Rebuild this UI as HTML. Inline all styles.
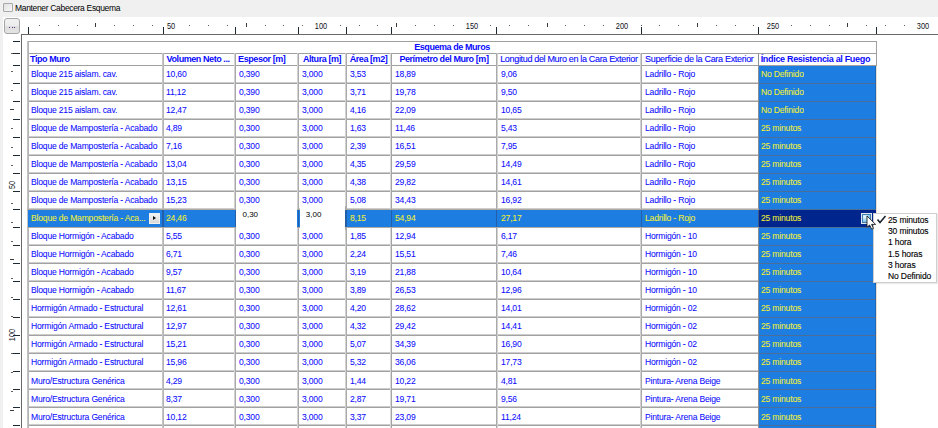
<!DOCTYPE html><html><head><meta charset="utf-8"><style>
*{margin:0;padding:0;box-sizing:border-box}
html,body{width:938px;height:428px;overflow:hidden;background:#f0f0f0;font-family:"Liberation Sans",sans-serif}
.a{position:absolute}
.t{position:absolute;white-space:nowrap;font-size:9.6px;letter-spacing:-0.2px;line-height:12px;color:#0a0aff;-webkit-text-stroke:0.06px currentColor;transform:scaleX(0.892);transform-origin:0 0}
.hb{font-weight:bold;font-size:9px;letter-spacing:-0.43px;-webkit-text-stroke:0;transform:none}
.y{color:#f0f030}
.dot{position:absolute;background:#3a3a3a}
</style></head><body>
<div class="a" style="left:3px;top:3px;width:10px;height:9px;border:1px solid #a8a8a8;background:linear-gradient(135deg,#e0e0e0,#f8f8f8);border-radius:1px"></div>
<div class="a" style="left:15px;top:2px;font-size:8.5px;letter-spacing:-0.33px;line-height:12px;color:#000;white-space:nowrap">Mantener Cabecera Esquema</div>
<div class="a" style="left:3px;top:17px;width:935px;height:411px;background:#fff"></div>
<div class="a" style="left:4px;top:18px;width:16px;height:16px;border:1px solid #a6a6a6;border-radius:3px;background:linear-gradient(#f2f2f2 0,#ececec 50%,#dedede 51%,#e4e4e4 100%)"></div>
<div class="a" style="left:9px;top:27px;width:1.2px;height:1.2px;background:#5a3a7a"></div>
<div class="a" style="left:11.5px;top:27px;width:1.2px;height:1.2px;background:#5a3a7a"></div>
<div class="a" style="left:14px;top:27px;width:1.2px;height:1.2px;background:#5a3a7a"></div>
<div class="dot" style="left:38.9px;top:25px;width:1px;height:1px;background:#606060"></div>
<div class="dot" style="left:57.7px;top:25px;width:1px;height:1px;background:#606060"></div>
<div class="dot" style="left:76.5px;top:25px;width:1px;height:1px;background:#606060"></div>
<div class="dot" style="left:95.3px;top:23px;width:1px;height:4px"></div>
<div class="dot" style="left:114.1px;top:25px;width:1px;height:1px;background:#606060"></div>
<div class="dot" style="left:132.9px;top:25px;width:1px;height:1px;background:#606060"></div>
<div class="dot" style="left:151.7px;top:25px;width:1px;height:1px;background:#606060"></div>
<div class="a" style="left:156.0px;top:20.5px;width:30px;text-align:center;font-size:8.5px;line-height:10px;color:#101020;transform:scaleX(0.87)">50</div>
<div class="dot" style="left:189.3px;top:25px;width:1px;height:1px;background:#606060"></div>
<div class="dot" style="left:208.1px;top:25px;width:1px;height:1px;background:#606060"></div>
<div class="dot" style="left:226.9px;top:25px;width:1px;height:1px;background:#606060"></div>
<div class="dot" style="left:245.7px;top:23px;width:1px;height:4px"></div>
<div class="dot" style="left:264.5px;top:25px;width:1px;height:1px;background:#606060"></div>
<div class="dot" style="left:283.3px;top:25px;width:1px;height:1px;background:#606060"></div>
<div class="dot" style="left:302.1px;top:25px;width:1px;height:1px;background:#606060"></div>
<div class="a" style="left:306.4px;top:20.5px;width:30px;text-align:center;font-size:8.5px;line-height:10px;color:#101020;transform:scaleX(0.87)">100</div>
<div class="dot" style="left:339.7px;top:25px;width:1px;height:1px;background:#606060"></div>
<div class="dot" style="left:358.5px;top:25px;width:1px;height:1px;background:#606060"></div>
<div class="dot" style="left:377.3px;top:25px;width:1px;height:1px;background:#606060"></div>
<div class="dot" style="left:396.1px;top:23px;width:1px;height:4px"></div>
<div class="dot" style="left:414.9px;top:25px;width:1px;height:1px;background:#606060"></div>
<div class="dot" style="left:433.7px;top:25px;width:1px;height:1px;background:#606060"></div>
<div class="dot" style="left:452.5px;top:25px;width:1px;height:1px;background:#606060"></div>
<div class="a" style="left:456.8px;top:20.5px;width:30px;text-align:center;font-size:8.5px;line-height:10px;color:#101020;transform:scaleX(0.87)">150</div>
<div class="dot" style="left:490.1px;top:25px;width:1px;height:1px;background:#606060"></div>
<div class="dot" style="left:508.9px;top:25px;width:1px;height:1px;background:#606060"></div>
<div class="dot" style="left:527.7px;top:25px;width:1px;height:1px;background:#606060"></div>
<div class="dot" style="left:546.5px;top:23px;width:1px;height:4px"></div>
<div class="dot" style="left:565.3px;top:25px;width:1px;height:1px;background:#606060"></div>
<div class="dot" style="left:584.1px;top:25px;width:1px;height:1px;background:#606060"></div>
<div class="dot" style="left:602.9px;top:25px;width:1px;height:1px;background:#606060"></div>
<div class="a" style="left:607.2px;top:20.5px;width:30px;text-align:center;font-size:8.5px;line-height:10px;color:#101020;transform:scaleX(0.87)">200</div>
<div class="dot" style="left:640.5px;top:25px;width:1px;height:1px;background:#606060"></div>
<div class="dot" style="left:659.3px;top:25px;width:1px;height:1px;background:#606060"></div>
<div class="dot" style="left:678.1px;top:25px;width:1px;height:1px;background:#606060"></div>
<div class="dot" style="left:696.9px;top:23px;width:1px;height:4px"></div>
<div class="dot" style="left:715.7px;top:25px;width:1px;height:1px;background:#606060"></div>
<div class="dot" style="left:734.5px;top:25px;width:1px;height:1px;background:#606060"></div>
<div class="dot" style="left:753.3px;top:25px;width:1px;height:1px;background:#606060"></div>
<div class="a" style="left:757.6px;top:20.5px;width:30px;text-align:center;font-size:8.5px;line-height:10px;color:#101020;transform:scaleX(0.87)">250</div>
<div class="dot" style="left:790.9px;top:25px;width:1px;height:1px;background:#606060"></div>
<div class="dot" style="left:809.7px;top:25px;width:1px;height:1px;background:#606060"></div>
<div class="dot" style="left:828.5px;top:25px;width:1px;height:1px;background:#606060"></div>
<div class="dot" style="left:847.3px;top:23px;width:1px;height:4px"></div>
<div class="dot" style="left:866.1px;top:25px;width:1px;height:1px;background:#606060"></div>
<div class="dot" style="left:884.9px;top:25px;width:1px;height:1px;background:#606060"></div>
<div class="dot" style="left:903.7px;top:25px;width:1px;height:1px;background:#606060"></div>
<div class="a" style="left:908.0px;top:20.5px;width:30px;text-align:center;font-size:8.5px;line-height:10px;color:#101020;transform:scaleX(0.87)">300</div>
<div class="dot" style="left:28px;top:27px;width:1px;height:7px;background:#1e2830"></div>
<div class="dot" style="left:163px;top:27px;width:1px;height:7px;background:#1e2830"></div>
<div class="dot" style="left:235px;top:27px;width:1px;height:7px;background:#1e2830"></div>
<div class="dot" style="left:298px;top:27px;width:1px;height:7px;background:#1e2830"></div>
<div class="dot" style="left:346px;top:27px;width:1px;height:7px;background:#1e2830"></div>
<div class="dot" style="left:391px;top:27px;width:1px;height:7px;background:#1e2830"></div>
<div class="dot" style="left:496px;top:27px;width:1px;height:7px;background:#1e2830"></div>
<div class="dot" style="left:641px;top:27px;width:1px;height:7px;background:#1e2830"></div>
<div class="dot" style="left:758px;top:27px;width:1px;height:7px;background:#1e2830"></div>
<div class="dot" style="left:876px;top:27px;width:1px;height:7px;background:#1e2830"></div>
<div class="a" style="left:21px;top:34px;width:917px;height:1px;background:#686868"></div>
<div class="a" style="left:21px;top:34px;width:1px;height:394px;background:#686868"></div>
<div class="dot" style="left:11px;top:52.6px;width:2px;height:1px;background:#606060"></div>
<div class="dot" style="left:11px;top:71.4px;width:2px;height:1px;background:#606060"></div>
<div class="dot" style="left:11px;top:90.2px;width:2px;height:1px;background:#606060"></div>
<div class="dot" style="left:10px;top:109.0px;width:4px;height:1px"></div>
<div class="dot" style="left:11px;top:127.8px;width:2px;height:1px;background:#606060"></div>
<div class="dot" style="left:11px;top:146.6px;width:2px;height:1px;background:#606060"></div>
<div class="dot" style="left:11px;top:165.4px;width:2px;height:1px;background:#606060"></div>
<svg class="a" style="left:4px;top:169.7px" width="16" height="30" viewBox="0 0 16 30"><text x="0" y="0" transform="translate(11.3 15) rotate(-90) scale(0.87 1)" text-anchor="middle" font-family="Liberation Sans" font-size="8.5" fill="#101020">50</text></svg>
<div class="dot" style="left:11px;top:203.0px;width:2px;height:1px;background:#606060"></div>
<div class="dot" style="left:11px;top:221.8px;width:2px;height:1px;background:#606060"></div>
<div class="dot" style="left:11px;top:240.6px;width:2px;height:1px;background:#606060"></div>
<div class="dot" style="left:10px;top:259.4px;width:4px;height:1px"></div>
<div class="dot" style="left:11px;top:278.2px;width:2px;height:1px;background:#606060"></div>
<div class="dot" style="left:11px;top:297.0px;width:2px;height:1px;background:#606060"></div>
<div class="dot" style="left:11px;top:315.8px;width:2px;height:1px;background:#606060"></div>
<svg class="a" style="left:4px;top:320.1px" width="16" height="30" viewBox="0 0 16 30"><text x="0" y="0" transform="translate(11.3 15) rotate(-90) scale(0.87 1)" text-anchor="middle" font-family="Liberation Sans" font-size="8.5" fill="#101020">100</text></svg>
<div class="dot" style="left:11px;top:353.4px;width:2px;height:1px;background:#606060"></div>
<div class="dot" style="left:11px;top:372.2px;width:2px;height:1px;background:#606060"></div>
<div class="dot" style="left:11px;top:391.0px;width:2px;height:1px;background:#606060"></div>
<div class="dot" style="left:10px;top:409.8px;width:4px;height:1px"></div>
<div class="dot" style="left:13px;top:41px;width:7px;height:1px;background:#1e2830"></div>
<div class="dot" style="left:13px;top:53px;width:7px;height:1px;background:#1e2830"></div>
<div class="dot" style="left:13px;top:65px;width:7px;height:1px;background:#1e2830"></div>
<div class="dot" style="left:13px;top:83px;width:7px;height:1px;background:#1e2830"></div>
<div class="dot" style="left:13px;top:101px;width:7px;height:1px;background:#1e2830"></div>
<div class="dot" style="left:13px;top:119px;width:7px;height:1px;background:#1e2830"></div>
<div class="dot" style="left:13px;top:137px;width:7px;height:1px;background:#1e2830"></div>
<div class="dot" style="left:13px;top:155px;width:7px;height:1px;background:#1e2830"></div>
<div class="dot" style="left:13px;top:173px;width:7px;height:1px;background:#1e2830"></div>
<div class="dot" style="left:13px;top:191px;width:7px;height:1px;background:#1e2830"></div>
<div class="dot" style="left:13px;top:209px;width:7px;height:1px;background:#1e2830"></div>
<div class="dot" style="left:13px;top:227px;width:7px;height:1px;background:#1e2830"></div>
<div class="dot" style="left:13px;top:245px;width:7px;height:1px;background:#1e2830"></div>
<div class="dot" style="left:13px;top:263px;width:7px;height:1px;background:#1e2830"></div>
<div class="dot" style="left:13px;top:281px;width:7px;height:1px;background:#1e2830"></div>
<div class="dot" style="left:13px;top:299px;width:7px;height:1px;background:#1e2830"></div>
<div class="dot" style="left:13px;top:317px;width:7px;height:1px;background:#1e2830"></div>
<div class="dot" style="left:13px;top:335px;width:7px;height:1px;background:#1e2830"></div>
<div class="dot" style="left:13px;top:353px;width:7px;height:1px;background:#1e2830"></div>
<div class="dot" style="left:13px;top:371px;width:7px;height:1px;background:#1e2830"></div>
<div class="dot" style="left:13px;top:389px;width:7px;height:1px;background:#1e2830"></div>
<div class="dot" style="left:13px;top:407px;width:7px;height:1px;background:#1e2830"></div>
<div class="dot" style="left:13px;top:425px;width:7px;height:1px;background:#1e2830"></div>
<div class="a" style="left:27px;top:41px;width:850px;height:1px;background:#a0a0a0"></div>
<div class="a" style="left:27px;top:53px;width:850px;height:1px;background:#a0a0a0"></div>
<div class="a" style="left:27px;top:65px;width:850px;height:1px;background:#a0a0a0"></div>
<div class="a" style="left:27px;top:82px;width:732px;height:1px;background:#cdcdcd"></div>
<div class="a" style="left:27px;top:83px;width:732px;height:1px;background:#a2a2a2"></div>
<div class="a" style="left:27px;top:100px;width:732px;height:1px;background:#cdcdcd"></div>
<div class="a" style="left:27px;top:101px;width:732px;height:1px;background:#a2a2a2"></div>
<div class="a" style="left:27px;top:118px;width:732px;height:1px;background:#cdcdcd"></div>
<div class="a" style="left:27px;top:119px;width:732px;height:1px;background:#a2a2a2"></div>
<div class="a" style="left:27px;top:136px;width:732px;height:1px;background:#cdcdcd"></div>
<div class="a" style="left:27px;top:137px;width:732px;height:1px;background:#a2a2a2"></div>
<div class="a" style="left:27px;top:154px;width:732px;height:1px;background:#cdcdcd"></div>
<div class="a" style="left:27px;top:155px;width:732px;height:1px;background:#a2a2a2"></div>
<div class="a" style="left:27px;top:172px;width:732px;height:1px;background:#cdcdcd"></div>
<div class="a" style="left:27px;top:173px;width:732px;height:1px;background:#a2a2a2"></div>
<div class="a" style="left:27px;top:190px;width:732px;height:1px;background:#cdcdcd"></div>
<div class="a" style="left:27px;top:191px;width:732px;height:1px;background:#a2a2a2"></div>
<div class="a" style="left:27px;top:208px;width:732px;height:1px;background:#cdcdcd"></div>
<div class="a" style="left:27px;top:209px;width:732px;height:1px;background:#a2a2a2"></div>
<div class="a" style="left:27px;top:226px;width:732px;height:1px;background:#cdcdcd"></div>
<div class="a" style="left:27px;top:227px;width:732px;height:1px;background:#a2a2a2"></div>
<div class="a" style="left:27px;top:244px;width:732px;height:1px;background:#cdcdcd"></div>
<div class="a" style="left:27px;top:245px;width:732px;height:1px;background:#a2a2a2"></div>
<div class="a" style="left:27px;top:262px;width:732px;height:1px;background:#cdcdcd"></div>
<div class="a" style="left:27px;top:263px;width:732px;height:1px;background:#a2a2a2"></div>
<div class="a" style="left:27px;top:280px;width:732px;height:1px;background:#cdcdcd"></div>
<div class="a" style="left:27px;top:281px;width:732px;height:1px;background:#a2a2a2"></div>
<div class="a" style="left:27px;top:298px;width:732px;height:1px;background:#cdcdcd"></div>
<div class="a" style="left:27px;top:299px;width:732px;height:1px;background:#a2a2a2"></div>
<div class="a" style="left:27px;top:316px;width:732px;height:1px;background:#cdcdcd"></div>
<div class="a" style="left:27px;top:317px;width:732px;height:1px;background:#a2a2a2"></div>
<div class="a" style="left:27px;top:334px;width:732px;height:1px;background:#cdcdcd"></div>
<div class="a" style="left:27px;top:335px;width:732px;height:1px;background:#a2a2a2"></div>
<div class="a" style="left:27px;top:352px;width:732px;height:1px;background:#cdcdcd"></div>
<div class="a" style="left:27px;top:353px;width:732px;height:1px;background:#a2a2a2"></div>
<div class="a" style="left:27px;top:370px;width:732px;height:1px;background:#cdcdcd"></div>
<div class="a" style="left:27px;top:371px;width:732px;height:1px;background:#a2a2a2"></div>
<div class="a" style="left:27px;top:388px;width:732px;height:1px;background:#cdcdcd"></div>
<div class="a" style="left:27px;top:389px;width:732px;height:1px;background:#a2a2a2"></div>
<div class="a" style="left:27px;top:406px;width:732px;height:1px;background:#cdcdcd"></div>
<div class="a" style="left:27px;top:407px;width:732px;height:1px;background:#a2a2a2"></div>
<div class="a" style="left:27px;top:424px;width:732px;height:1px;background:#cdcdcd"></div>
<div class="a" style="left:27px;top:425px;width:732px;height:1px;background:#a2a2a2"></div>
<div class="a" style="left:27px;top:41px;width:1px;height:387px;background:#c2c2c2"></div>
<div class="a" style="left:28px;top:41px;width:1px;height:387px;background:#b4b4b4"></div>
<div class="a" style="left:162px;top:53px;width:1px;height:375px;background:#c4c4c4"></div>
<div class="a" style="left:163px;top:53px;width:1px;height:375px;background:#b4b4b4"></div>
<div class="a" style="left:234px;top:53px;width:1px;height:375px;background:#d2d2d2"></div>
<div class="a" style="left:235px;top:53px;width:1px;height:375px;background:#aaaaaa"></div>
<div class="a" style="left:297px;top:53px;width:1px;height:375px;background:#d2d2d2"></div>
<div class="a" style="left:298px;top:53px;width:1px;height:375px;background:#aaaaaa"></div>
<div class="a" style="left:345px;top:53px;width:1px;height:375px;background:#d2d2d2"></div>
<div class="a" style="left:346px;top:53px;width:1px;height:375px;background:#aaaaaa"></div>
<div class="a" style="left:390px;top:53px;width:1px;height:375px;background:#d8d8d8"></div>
<div class="a" style="left:391px;top:53px;width:1px;height:375px;background:#a4a4a4"></div>
<div class="a" style="left:496px;top:53px;width:1px;height:375px;background:#aaaaaa"></div>
<div class="a" style="left:497px;top:53px;width:1px;height:375px;background:#d2d2d2"></div>
<div class="a" style="left:640px;top:53px;width:1px;height:375px;background:#d2d2d2"></div>
<div class="a" style="left:641px;top:53px;width:1px;height:375px;background:#aaaaaa"></div>
<div class="a" style="left:758px;top:53px;width:1px;height:375px;background:#8c9096"></div>
<div class="a" style="left:876px;top:41px;width:1px;height:25px;background:#a0a0a0"></div>
<div class="a" style="left:759px;top:66px;width:117px;height:362px;background:#1e7de0"></div>
<div class="a" style="left:875px;top:66px;width:1px;height:362px;background:#1a68b8"></div>
<div class="a" style="left:876px;top:66px;width:1px;height:362px;background:#e8ded2"></div>
<div class="a" style="left:759px;top:83px;width:117px;height:1px;background:#4a6e98"></div>
<div class="a" style="left:759px;top:101px;width:117px;height:1px;background:#4a6e98"></div>
<div class="a" style="left:759px;top:119px;width:117px;height:1px;background:#4a6e98"></div>
<div class="a" style="left:759px;top:137px;width:117px;height:1px;background:#4a6e98"></div>
<div class="a" style="left:759px;top:155px;width:117px;height:1px;background:#4a6e98"></div>
<div class="a" style="left:759px;top:173px;width:117px;height:1px;background:#4a6e98"></div>
<div class="a" style="left:759px;top:191px;width:117px;height:1px;background:#4a6e98"></div>
<div class="a" style="left:759px;top:209px;width:117px;height:1px;background:#4a6e98"></div>
<div class="a" style="left:759px;top:227px;width:117px;height:1px;background:#4a6e98"></div>
<div class="a" style="left:759px;top:245px;width:117px;height:1px;background:#4a6e98"></div>
<div class="a" style="left:759px;top:263px;width:117px;height:1px;background:#4a6e98"></div>
<div class="a" style="left:759px;top:281px;width:117px;height:1px;background:#4a6e98"></div>
<div class="a" style="left:759px;top:299px;width:117px;height:1px;background:#4a6e98"></div>
<div class="a" style="left:759px;top:317px;width:117px;height:1px;background:#4a6e98"></div>
<div class="a" style="left:759px;top:335px;width:117px;height:1px;background:#4a6e98"></div>
<div class="a" style="left:759px;top:353px;width:117px;height:1px;background:#4a6e98"></div>
<div class="a" style="left:759px;top:371px;width:117px;height:1px;background:#4a6e98"></div>
<div class="a" style="left:759px;top:389px;width:117px;height:1px;background:#4a6e98"></div>
<div class="a" style="left:759px;top:407px;width:117px;height:1px;background:#4a6e98"></div>
<div class="a" style="left:759px;top:425px;width:117px;height:1px;background:#4a6e98"></div>
<div class="a" style="left:27px;top:209px;width:732px;height:1px;background:#b0aaa2"></div>
<div class="a" style="left:27px;top:227px;width:732px;height:1px;background:#b0aaa2"></div>
<div class="a" style="left:28px;top:210px;width:731px;height:17px;background:#1e7de0"></div>
<div class="a" style="left:759px;top:210px;width:117px;height:17px;background:#00258c"></div>
<div class="a" style="left:162px;top:210px;width:1px;height:17px;background:rgba(40,60,100,0.45)"></div>
<div class="a" style="left:163px;top:210px;width:1px;height:17px;background:rgba(40,60,100,0.45)"></div>
<div class="a" style="left:235px;top:210px;width:1px;height:17px;background:rgba(40,60,100,0.45)"></div>
<div class="a" style="left:298px;top:210px;width:1px;height:17px;background:rgba(40,60,100,0.45)"></div>
<div class="a" style="left:345px;top:210px;width:1px;height:17px;background:rgba(40,60,100,0.45)"></div>
<div class="a" style="left:346px;top:210px;width:1px;height:17px;background:rgba(40,60,100,0.45)"></div>
<div class="a" style="left:391px;top:210px;width:1px;height:17px;background:rgba(40,60,100,0.45)"></div>
<div class="a" style="left:496px;top:210px;width:1px;height:17px;background:rgba(40,60,100,0.45)"></div>
<div class="a" style="left:641px;top:210px;width:1px;height:17px;background:rgba(40,60,100,0.45)"></div>
<div class="a" style="left:758px;top:210px;width:1px;height:17px;background:#3a5a88"></div>
<div class="a" style="left:236px;top:206px;width:61px;height:24px;background:#fff"></div>
<div class="a" style="left:300px;top:206px;width:45px;height:24px;background:#fff"></div>
<div class="a" style="left:235px;top:206px;width:1px;height:3px;background:#aaaaaa"></div>
<div class="a" style="left:235px;top:227px;width:1px;height:3px;background:#aaaaaa"></div>
<div class="a" style="left:298px;top:206px;width:1px;height:3px;background:#aaaaaa"></div>
<div class="a" style="left:298px;top:227px;width:1px;height:3px;background:#aaaaaa"></div>
<div class="a" style="left:345px;top:206px;width:1px;height:3px;background:#aaaaaa"></div>
<div class="a" style="left:345px;top:227px;width:1px;height:3px;background:#aaaaaa"></div>
<div class="t hb" style="left:0;width:904px;text-align:center;top:41px">Esquema de Muros</div>
<div class="t hb" style="left:30.0px;top:53px">Tipo Muro</div>
<div class="t hb" style="left:166.6px;top:53px">Volumen Neto ...</div>
<div class="t hb" style="left:238.1px;top:53px">Espesor [m]</div>
<div class="t hb" style="left:302.9px;top:53px">Altura [m]</div>
<div class="t hb" style="left:349.7px;top:53px">Área [m2]</div>
<div class="t hb" style="left:399.4px;top:53px">Perímetro del Muro [m]</div>
<div class="t" style="left:500.2px;top:53px;letter-spacing:-0.33px;font-size:9px;transform:none;-webkit-text-stroke:0.12px currentColor">Longitud del Muro en la Cara Exterior</div>
<div class="t" style="left:645.0px;top:53px;letter-spacing:-0.3px;font-size:9px;transform:none;-webkit-text-stroke:0.12px currentColor">Superficie de la Cara Exterior</div>
<div class="t hb" style="left:760.7px;top:53px;letter-spacing:-0.32px">Índice Resistencia al Fuego</div>
<div class="t" style="left:30.6px;top:67.5px">Bloque 215 aislam. cav.</div>
<div class="t" style="left:166.2px;top:67.5px">10,60</div>
<div class="t" style="left:238.6px;top:67.5px">0,390</div>
<div class="t" style="left:301.8px;top:67.5px">3,000</div>
<div class="t" style="left:349.8px;top:67.5px">3,53</div>
<div class="t" style="left:395.0px;top:67.5px">18,89</div>
<div class="t" style="left:500.5px;top:67.5px">9,06</div>
<div class="t" style="left:644.6px;top:67.5px">Ladrillo - Rojo</div>
<div class="t y" style="left:760.8px;top:67.5px">No Definido</div>
<div class="t" style="left:30.6px;top:85.5px">Bloque 215 aislam. cav.</div>
<div class="t" style="left:166.2px;top:85.5px">11,12</div>
<div class="t" style="left:238.6px;top:85.5px">0,390</div>
<div class="t" style="left:301.8px;top:85.5px">3,000</div>
<div class="t" style="left:349.8px;top:85.5px">3,71</div>
<div class="t" style="left:395.0px;top:85.5px">19,78</div>
<div class="t" style="left:500.5px;top:85.5px">9,50</div>
<div class="t" style="left:644.6px;top:85.5px">Ladrillo - Rojo</div>
<div class="t y" style="left:760.8px;top:85.5px">No Definido</div>
<div class="t" style="left:30.6px;top:103.5px">Bloque 215 aislam. cav.</div>
<div class="t" style="left:166.2px;top:103.5px">12,47</div>
<div class="t" style="left:238.6px;top:103.5px">0,390</div>
<div class="t" style="left:301.8px;top:103.5px">3,000</div>
<div class="t" style="left:349.8px;top:103.5px">4,16</div>
<div class="t" style="left:395.0px;top:103.5px">22,09</div>
<div class="t" style="left:500.5px;top:103.5px">10,65</div>
<div class="t" style="left:644.6px;top:103.5px">Ladrillo - Rojo</div>
<div class="t y" style="left:760.8px;top:103.5px">No Definido</div>
<div class="t" style="left:30.6px;top:121.5px">Bloque de Mampostería - Acabado</div>
<div class="t" style="left:166.2px;top:121.5px">4,89</div>
<div class="t" style="left:238.6px;top:121.5px">0,300</div>
<div class="t" style="left:301.8px;top:121.5px">3,000</div>
<div class="t" style="left:349.8px;top:121.5px">1,63</div>
<div class="t" style="left:395.0px;top:121.5px">11,46</div>
<div class="t" style="left:500.5px;top:121.5px">5,43</div>
<div class="t" style="left:644.6px;top:121.5px">Ladrillo - Rojo</div>
<div class="t y" style="left:760.8px;top:121.5px">25 minutos</div>
<div class="t" style="left:30.6px;top:139.5px">Bloque de Mampostería - Acabado</div>
<div class="t" style="left:166.2px;top:139.5px">7,16</div>
<div class="t" style="left:238.6px;top:139.5px">0,300</div>
<div class="t" style="left:301.8px;top:139.5px">3,000</div>
<div class="t" style="left:349.8px;top:139.5px">2,39</div>
<div class="t" style="left:395.0px;top:139.5px">16,51</div>
<div class="t" style="left:500.5px;top:139.5px">7,95</div>
<div class="t" style="left:644.6px;top:139.5px">Ladrillo - Rojo</div>
<div class="t y" style="left:760.8px;top:139.5px">25 minutos</div>
<div class="t" style="left:30.6px;top:157.5px">Bloque de Mampostería - Acabado</div>
<div class="t" style="left:166.2px;top:157.5px">13,04</div>
<div class="t" style="left:238.6px;top:157.5px">0,300</div>
<div class="t" style="left:301.8px;top:157.5px">3,000</div>
<div class="t" style="left:349.8px;top:157.5px">4,35</div>
<div class="t" style="left:395.0px;top:157.5px">29,59</div>
<div class="t" style="left:500.5px;top:157.5px">14,49</div>
<div class="t" style="left:644.6px;top:157.5px">Ladrillo - Rojo</div>
<div class="t y" style="left:760.8px;top:157.5px">25 minutos</div>
<div class="t" style="left:30.6px;top:175.5px">Bloque de Mampostería - Acabado</div>
<div class="t" style="left:166.2px;top:175.5px">13,15</div>
<div class="t" style="left:238.6px;top:175.5px">0,300</div>
<div class="t" style="left:301.8px;top:175.5px">3,000</div>
<div class="t" style="left:349.8px;top:175.5px">4,38</div>
<div class="t" style="left:395.0px;top:175.5px">29,82</div>
<div class="t" style="left:500.5px;top:175.5px">14,61</div>
<div class="t" style="left:644.6px;top:175.5px">Ladrillo - Rojo</div>
<div class="t y" style="left:760.8px;top:175.5px">25 minutos</div>
<div class="t" style="left:30.6px;top:193.5px">Bloque de Mampostería - Acabado</div>
<div class="t" style="left:166.2px;top:193.5px">15,23</div>
<div class="t" style="left:238.6px;top:193.5px">0,300</div>
<div class="t" style="left:301.8px;top:193.5px">3,000</div>
<div class="t" style="left:349.8px;top:193.5px">5,08</div>
<div class="t" style="left:395.0px;top:193.5px">34,43</div>
<div class="t" style="left:500.5px;top:193.5px">16,92</div>
<div class="t" style="left:644.6px;top:193.5px">Ladrillo - Rojo</div>
<div class="t y" style="left:760.8px;top:193.5px">25 minutos</div>
<div class="t y" style="left:30.6px;top:211.5px">Bloque de Mampostería - Aca...</div>
<div class="t y" style="left:166.2px;top:211.5px">24,46</div>
<div class="t y" style="left:349.8px;top:211.5px">8,15</div>
<div class="t y" style="left:395.0px;top:211.5px">54,94</div>
<div class="t y" style="left:500.5px;top:211.5px">27,17</div>
<div class="t y" style="left:644.6px;top:211.5px">Ladrillo - Rojo</div>
<div class="t y" style="left:760.8px;top:211.5px">25 minutos</div>
<div class="t" style="left:30.6px;top:229.5px">Bloque Hormigón - Acabado</div>
<div class="t" style="left:166.2px;top:229.5px">5,55</div>
<div class="t" style="left:238.6px;top:229.5px">0,300</div>
<div class="t" style="left:301.8px;top:229.5px">3,000</div>
<div class="t" style="left:349.8px;top:229.5px">1,85</div>
<div class="t" style="left:395.0px;top:229.5px">12,94</div>
<div class="t" style="left:500.5px;top:229.5px">6,17</div>
<div class="t" style="left:644.6px;top:229.5px">Hormigón - 10</div>
<div class="t y" style="left:760.8px;top:229.5px">25 minutos</div>
<div class="t" style="left:30.6px;top:247.5px">Bloque Hormigón - Acabado</div>
<div class="t" style="left:166.2px;top:247.5px">6,71</div>
<div class="t" style="left:238.6px;top:247.5px">0,300</div>
<div class="t" style="left:301.8px;top:247.5px">3,000</div>
<div class="t" style="left:349.8px;top:247.5px">2,24</div>
<div class="t" style="left:395.0px;top:247.5px">15,51</div>
<div class="t" style="left:500.5px;top:247.5px">7,46</div>
<div class="t" style="left:644.6px;top:247.5px">Hormigón - 10</div>
<div class="t y" style="left:760.8px;top:247.5px">25 minutos</div>
<div class="t" style="left:30.6px;top:265.5px">Bloque Hormigón - Acabado</div>
<div class="t" style="left:166.2px;top:265.5px">9,57</div>
<div class="t" style="left:238.6px;top:265.5px">0,300</div>
<div class="t" style="left:301.8px;top:265.5px">3,000</div>
<div class="t" style="left:349.8px;top:265.5px">3,19</div>
<div class="t" style="left:395.0px;top:265.5px">21,88</div>
<div class="t" style="left:500.5px;top:265.5px">10,64</div>
<div class="t" style="left:644.6px;top:265.5px">Hormigón - 10</div>
<div class="t y" style="left:760.8px;top:265.5px">25 minutos</div>
<div class="t" style="left:30.6px;top:283.5px">Bloque Hormigón - Acabado</div>
<div class="t" style="left:166.2px;top:283.5px">11,67</div>
<div class="t" style="left:238.6px;top:283.5px">0,300</div>
<div class="t" style="left:301.8px;top:283.5px">3,000</div>
<div class="t" style="left:349.8px;top:283.5px">3,89</div>
<div class="t" style="left:395.0px;top:283.5px">26,53</div>
<div class="t" style="left:500.5px;top:283.5px">12,96</div>
<div class="t" style="left:644.6px;top:283.5px">Hormigón - 10</div>
<div class="t y" style="left:760.8px;top:283.5px">25 minutos</div>
<div class="t" style="left:30.6px;top:301.5px">Hormigón Armado - Estructural</div>
<div class="t" style="left:166.2px;top:301.5px">12,61</div>
<div class="t" style="left:238.6px;top:301.5px">0,300</div>
<div class="t" style="left:301.8px;top:301.5px">3,000</div>
<div class="t" style="left:349.8px;top:301.5px">4,20</div>
<div class="t" style="left:395.0px;top:301.5px">28,62</div>
<div class="t" style="left:500.5px;top:301.5px">14,01</div>
<div class="t" style="left:644.6px;top:301.5px">Hormigón - 02</div>
<div class="t y" style="left:760.8px;top:301.5px">25 minutos</div>
<div class="t" style="left:30.6px;top:319.5px">Hormigón Armado - Estructural</div>
<div class="t" style="left:166.2px;top:319.5px">12,97</div>
<div class="t" style="left:238.6px;top:319.5px">0,300</div>
<div class="t" style="left:301.8px;top:319.5px">3,000</div>
<div class="t" style="left:349.8px;top:319.5px">4,32</div>
<div class="t" style="left:395.0px;top:319.5px">29,42</div>
<div class="t" style="left:500.5px;top:319.5px">14,41</div>
<div class="t" style="left:644.6px;top:319.5px">Hormigón - 02</div>
<div class="t y" style="left:760.8px;top:319.5px">25 minutos</div>
<div class="t" style="left:30.6px;top:337.5px">Hormigón Armado - Estructural</div>
<div class="t" style="left:166.2px;top:337.5px">15,21</div>
<div class="t" style="left:238.6px;top:337.5px">0,300</div>
<div class="t" style="left:301.8px;top:337.5px">3,000</div>
<div class="t" style="left:349.8px;top:337.5px">5,07</div>
<div class="t" style="left:395.0px;top:337.5px">34,39</div>
<div class="t" style="left:500.5px;top:337.5px">16,90</div>
<div class="t" style="left:644.6px;top:337.5px">Hormigón - 02</div>
<div class="t y" style="left:760.8px;top:337.5px">25 minutos</div>
<div class="t" style="left:30.6px;top:355.5px">Hormigón Armado - Estructural</div>
<div class="t" style="left:166.2px;top:355.5px">15,96</div>
<div class="t" style="left:238.6px;top:355.5px">0,300</div>
<div class="t" style="left:301.8px;top:355.5px">3,000</div>
<div class="t" style="left:349.8px;top:355.5px">5,32</div>
<div class="t" style="left:395.0px;top:355.5px">36,06</div>
<div class="t" style="left:500.5px;top:355.5px">17,73</div>
<div class="t" style="left:644.6px;top:355.5px">Hormigón - 02</div>
<div class="t y" style="left:760.8px;top:355.5px">25 minutos</div>
<div class="t" style="left:30.6px;top:374.5px">Muro/Estructura Genérica</div>
<div class="t" style="left:166.2px;top:374.5px">4,29</div>
<div class="t" style="left:238.6px;top:374.5px">0,300</div>
<div class="t" style="left:301.8px;top:374.5px">3,000</div>
<div class="t" style="left:349.8px;top:374.5px">1,44</div>
<div class="t" style="left:395.0px;top:374.5px">10,22</div>
<div class="t" style="left:500.5px;top:374.5px">4,81</div>
<div class="t" style="left:644.6px;top:374.5px">Pintura- Arena Beige</div>
<div class="t y" style="left:760.8px;top:374.5px">25 minutos</div>
<div class="t" style="left:30.6px;top:392.5px">Muro/Estructura Genérica</div>
<div class="t" style="left:166.2px;top:392.5px">8,37</div>
<div class="t" style="left:238.6px;top:392.5px">0,300</div>
<div class="t" style="left:301.8px;top:392.5px">3,000</div>
<div class="t" style="left:349.8px;top:392.5px">2,87</div>
<div class="t" style="left:395.0px;top:392.5px">19,71</div>
<div class="t" style="left:500.5px;top:392.5px">9,56</div>
<div class="t" style="left:644.6px;top:392.5px">Pintura- Arena Beige</div>
<div class="t y" style="left:760.8px;top:392.5px">25 minutos</div>
<div class="t" style="left:30.6px;top:410.5px">Muro/Estructura Genérica</div>
<div class="t" style="left:166.2px;top:410.5px">10,12</div>
<div class="t" style="left:238.6px;top:410.5px">0,300</div>
<div class="t" style="left:301.8px;top:410.5px">3,000</div>
<div class="t" style="left:349.8px;top:410.5px">3,37</div>
<div class="t" style="left:395.0px;top:410.5px">23,09</div>
<div class="t" style="left:500.5px;top:410.5px">11,24</div>
<div class="t" style="left:644.6px;top:410.5px">Pintura- Arena Beige</div>
<div class="t y" style="left:760.8px;top:410.5px">25 minutos</div>
<div class="a" style="left:242.5px;top:210px;font-size:8px;line-height:10px;color:#000;white-space:nowrap">0,30</div>
<div class="a" style="left:305.8px;top:210px;font-size:8px;line-height:10px;color:#000;white-space:nowrap">3,00</div>
<div class="a" style="left:149px;top:213px;width:11px;height:11px;border:1px solid #f0f0f0;background:linear-gradient(#f4f4f4,#d8d8d8)"></div>
<div class="a" style="left:153px;top:216px;width:0;height:0;border-top:2.5px solid transparent;border-bottom:2.5px solid transparent;border-left:3px solid #101010"></div>
<div class="a" style="left:861px;top:213px;width:11px;height:11px;border:1px solid #dfe6ee;box-shadow:inset 0 0 0 1px #3f7fb4;background:radial-gradient(circle at 30% 30%,#f4fbff 0,#a8daf4 35%,#3c9ad8 90%)"></div>
<div class="a" style="left:873px;top:213px;width:64px;height:70px;background:#fff;border:1px solid #cfcfcf;box-shadow:1px 1px 1px rgba(0,0,0,0.08)"></div>
<div class="a" style="left:888px;top:214.6px;font-size:8.5px;line-height:10px;color:#000;white-space:nowrap;-webkit-text-stroke:0.12px #000;letter-spacing:-0.12px">25 minutos</div>
<div class="a" style="left:888px;top:225.9px;font-size:8.5px;line-height:10px;color:#000;white-space:nowrap;-webkit-text-stroke:0.12px #000;letter-spacing:-0.12px">30 minutos</div>
<div class="a" style="left:888px;top:237.2px;font-size:8.5px;line-height:10px;color:#000;white-space:nowrap;-webkit-text-stroke:0.12px #000;letter-spacing:-0.12px">1 hora</div>
<div class="a" style="left:888px;top:248.5px;font-size:8.5px;line-height:10px;color:#000;white-space:nowrap;-webkit-text-stroke:0.12px #000;letter-spacing:-0.12px">1.5 horas</div>
<div class="a" style="left:888px;top:259.8px;font-size:8.5px;line-height:10px;color:#000;white-space:nowrap;-webkit-text-stroke:0.12px #000;letter-spacing:-0.12px">3 horas</div>
<div class="a" style="left:888px;top:271.1px;font-size:8.5px;line-height:10px;color:#000;white-space:nowrap;-webkit-text-stroke:0.12px #000;letter-spacing:-0.12px">No Definido</div>
<svg class="a" style="left:876px;top:215px" width="11" height="9" viewBox="0 0 11 9"><path d="M1.5 4.5 L4 7.5 L9.5 1" fill="none" stroke="#1a2430" stroke-width="1.6"/></svg>
<svg class="a" style="left:865.8px;top:215px" width="12" height="16" viewBox="0 0 12 16"><path d="M1 1 L1 12.2 L3.6 10 L5.6 14.2 L7.5 13.4 L5.6 9.4 L9.6 9.4 Z" fill="#fff" stroke="#202020" stroke-width="0.9" stroke-linejoin="round"/></svg>
</body></html>
